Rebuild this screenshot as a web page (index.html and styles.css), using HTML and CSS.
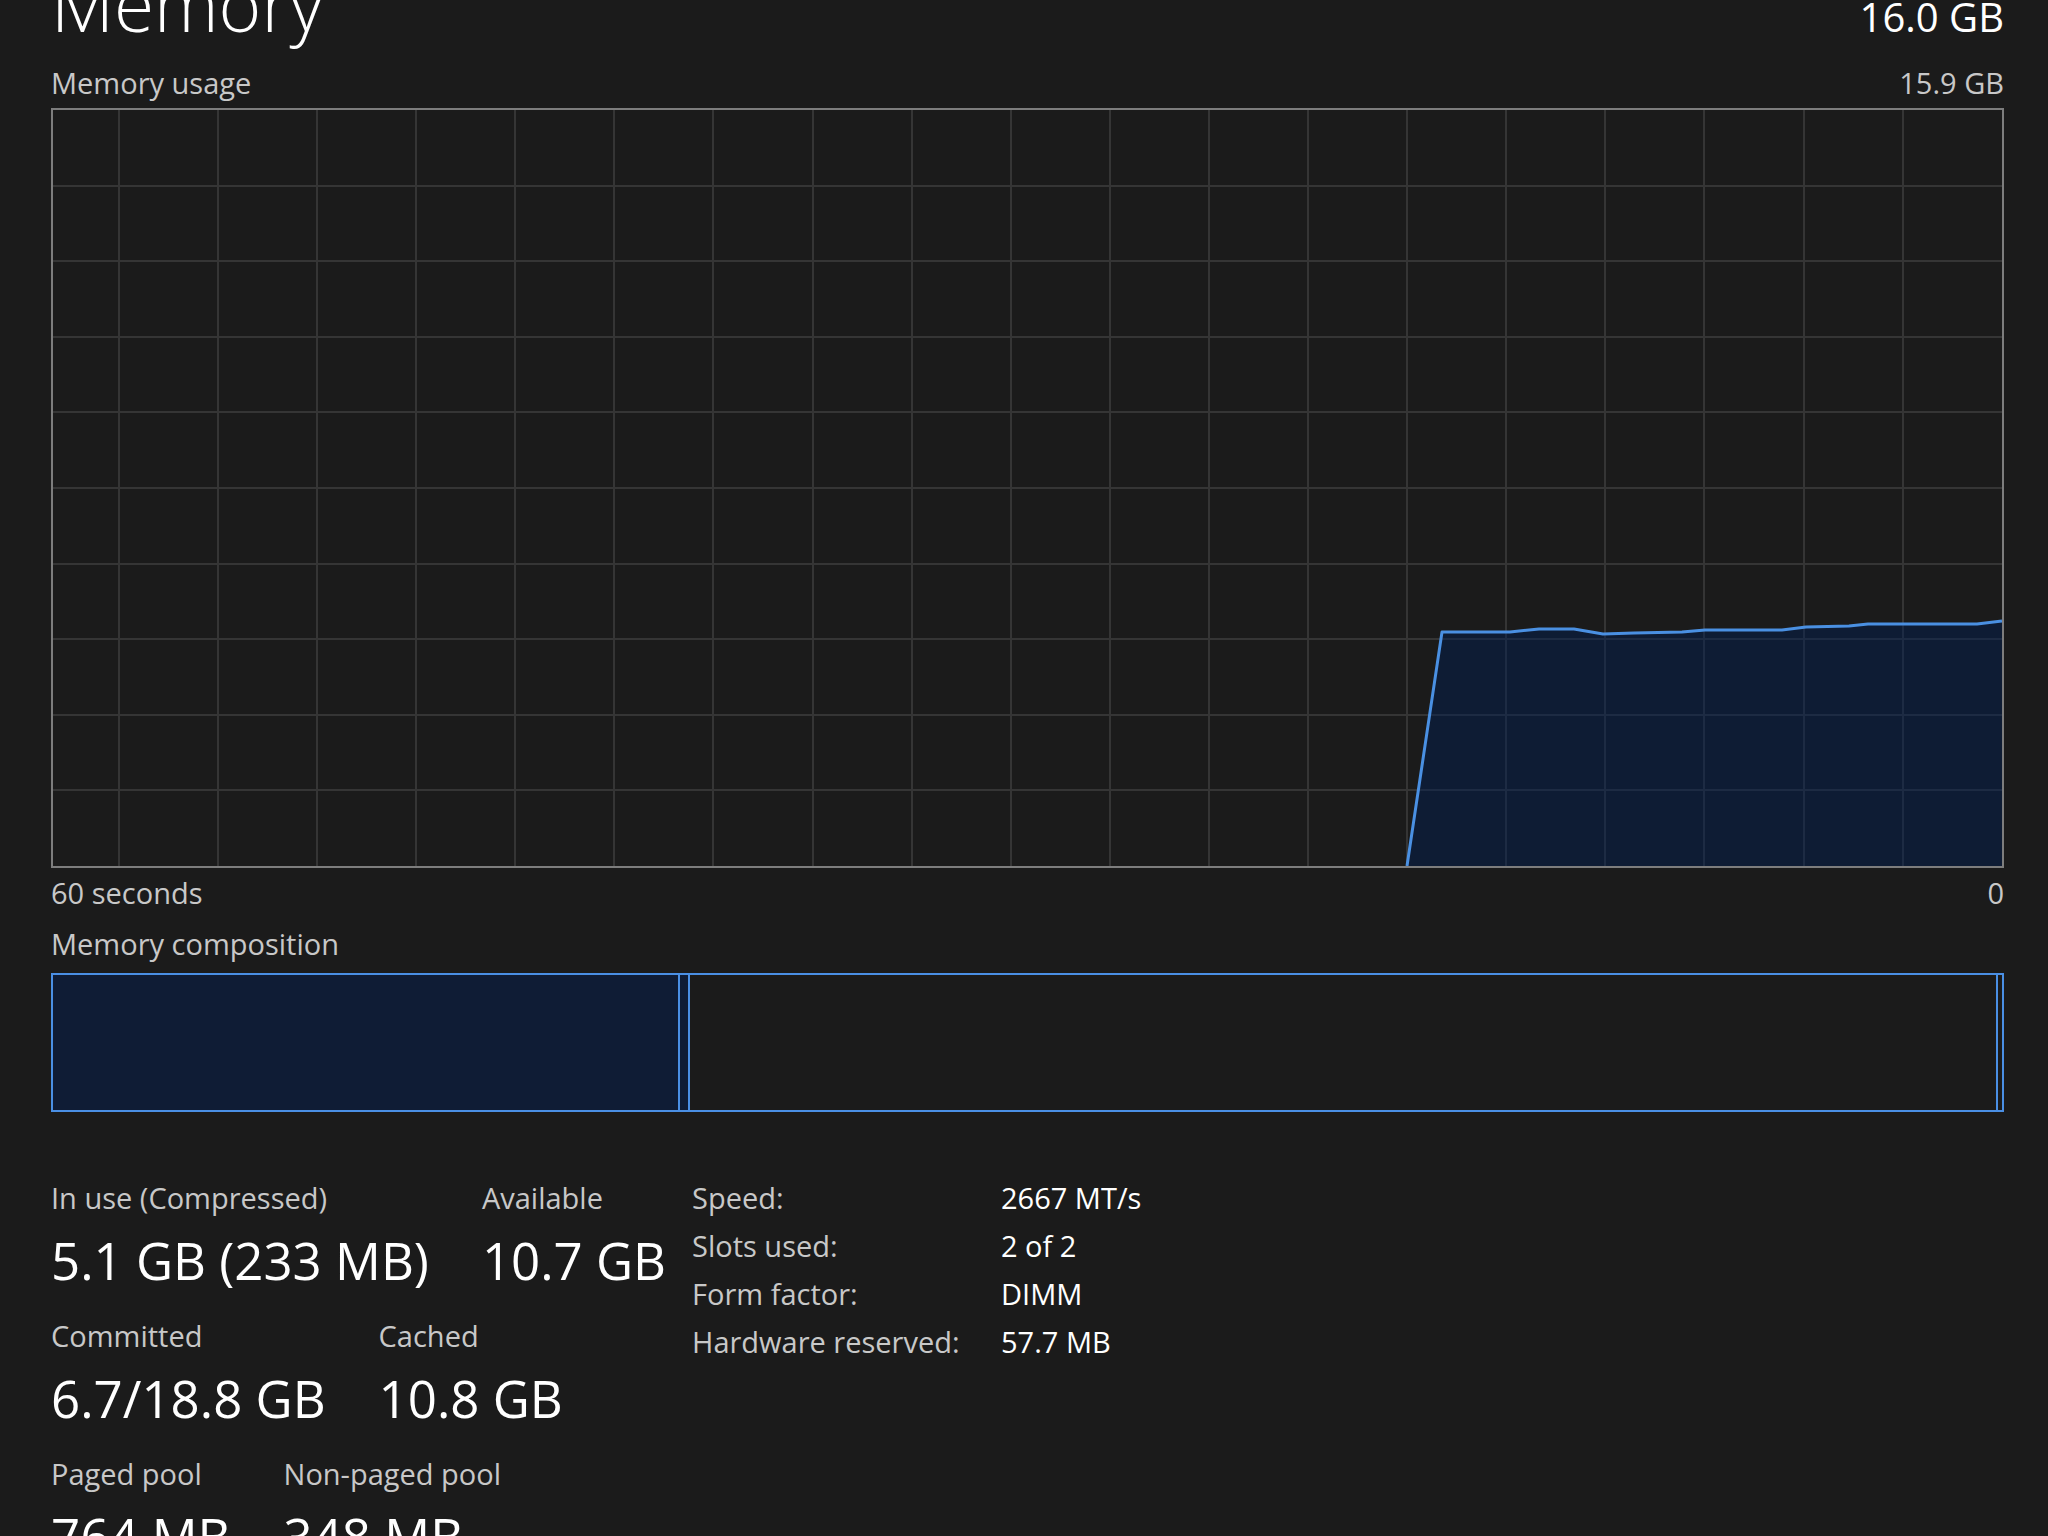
FILE: index.html
```html
<!DOCTYPE html>
<html lang="en">
<head>
  <meta charset="UTF-8">
  <meta name="viewport" content="width=device-width, initial-scale=1.0">
  <title>Memory</title>
  <link rel="stylesheet" href="styles.css">
</head>
<body>
  <div class="panel">
    <div class="head">
      <h1 class="title">Memory</h1>
      <span class="total">16.0 GB</span>
    </div>

    <div class="caption">
      <span>Memory usage</span>
      <span>15.9 GB</span>
    </div>
    <div class="chart">
      <svg viewBox="0 0 1949 756" preserveAspectRatio="none">
        <path class="grid" d="M66 0V756M165 0V756M264 0V756M363 0V756M462 0V756M561 0V756M660 0V756M760 0V756M859 0V756M958 0V756M1057 0V756M1156 0V756M1255 0V756M1354 0V756M1453 0V756M1552 0V756M1651 0V756M1751 0V756M1850 0V756M0 76H1949M0 151H1949M0 227H1949M0 302H1949M0 378H1949M0 454H1949M0 529H1949M0 605H1949M0 680H1949"/>
        <polygon class="area" points="1354,756 1389,522 1457,522 1486,519 1521,519 1550,524 1581,523 1629,522 1652,520 1729,520 1753,517 1796,516 1815,514 1924,514 1949,511 1949,756"/>
        <polyline class="line" points="1354,756 1389,522 1457,522 1486,519 1521,519 1550,524 1581,523 1629,522 1652,520 1729,520 1753,517 1796,516 1815,514 1924,514 1949,511"/>
      </svg>
    </div>
    <div class="caption axis">
      <span>60 seconds</span>
      <span>0</span>
    </div>

    <div class="caption comp-title">Memory composition</div>
    <div class="comp">
      <div class="seg in-use"></div>
      <div class="seg modified"></div>
      <div class="seg standby"></div>
      <div class="seg free"></div>
    </div>

    <div class="details">
      <div class="stats">
        <div class="row">
          <div class="stat">
            <div class="label">In use (Compressed)</div>
            <div class="value">5.1 GB (233 MB)</div>
          </div>
          <div class="stat">
            <div class="label">Available</div>
            <div class="value">10.7 GB</div>
          </div>
        </div>
        <div class="row">
          <div class="stat">
            <div class="label">Committed</div>
            <div class="value">6.7/18.8 GB</div>
          </div>
          <div class="stat">
            <div class="label">Cached</div>
            <div class="value">10.8 GB</div>
          </div>
        </div>
        <div class="row">
          <div class="stat">
            <div class="label">Paged pool</div>
            <div class="value">764 MB</div>
          </div>
          <div class="stat">
            <div class="label">Non-paged pool</div>
            <div class="value">348 MB</div>
          </div>
        </div>
      </div>

      <dl class="info">
        <dt>Speed:</dt><dd>2667 MT/s</dd>
        <dt>Slots used:</dt><dd>2 of 2</dd>
        <dt>Form factor:</dt><dd>DIMM</dd>
        <dt>Hardware reserved:</dt><dd>57.7 MB</dd>
      </dl>
    </div>
  </div>
</body>
</html>
```

FILE: styles.css
```css
html, body {
  overflow: hidden;
}
body {
  margin: 0;
  height: 100vh;
  background-color: #1b1b1b;
  color: #ffffff;
  font-family: "Open Sans", "Noto Sans", sans-serif;
}
.panel {
  padding: 0 44px 0 51px;
}

/* header: page name and installed size */
.head {
  display: flex;
  justify-content: space-between;
  align-items: baseline;
  margin-top: -32px;
}
.title {
  margin: 0;
  font-size: 73px;
  font-weight: 300;
  line-height: 72px;
}
.total {
  font-size: 40px;
}

/* small grey captions around the chart */
.caption {
  display: flex;
  justify-content: space-between;
  font-size: 29px;
  line-height: 36px;
  color: #c8c8c8;
  margin-top: 21px;
}
.axis {
  margin-top: 7px;
}
.comp-title {
  margin-top: 15px;
}

.chart {
  height: 760px;
  margin-top: 7px;
  border: 2px solid #7d7d7d;
  box-sizing: border-box;
}
.chart svg {
  display: block;
  width: 100%;
  height: 100%;
}
.grid {
  fill: none;
  stroke: #353535;
  stroke-width: 2;
}
.area {
  fill: rgba(0, 30, 85, 0.45);
}
.line {
  fill: none;
  stroke: #4a90e2;
  stroke-width: 3;
  stroke-linejoin: round;
}

/* composition bar */
.comp {
  display: flex;
  height: 139px;
  margin-top: 11px;
  border: 2px solid #4a8fe4;
  box-sizing: border-box;
}
.seg {
  border-right: 2px solid #4a8fe4;
}
.in-use {
  width: 625px;
  background-color: #0f1c35;
}
.modified {
  width: 8px;
  background-color: #0f1c35;
}
.standby {
  flex: 1;
}
.free {
  width: 4px;
  border-right: none;
}

/* numbers below */
.details {
  display: flex;
  margin-top: 62px;
}
.stats {
  width: 641px;
}
.row {
  display: flex;
  gap: 53px;
}
.row + .row {
  margin-top: 14px;
}
.label {
  font-size: 29px;
  line-height: 48px;
  color: #c8c8c8;
}
.value {
  font-size: 51px;
  line-height: 76px;
}
.info {
  display: grid;
  grid-template-columns: 309px auto;
  margin: 0;
  font-size: 29px;
  line-height: 48px;
  align-content: start;
}
.info dt {
  color: #c8c8c8;
}
.info dd {
  margin: 0;
}
```
